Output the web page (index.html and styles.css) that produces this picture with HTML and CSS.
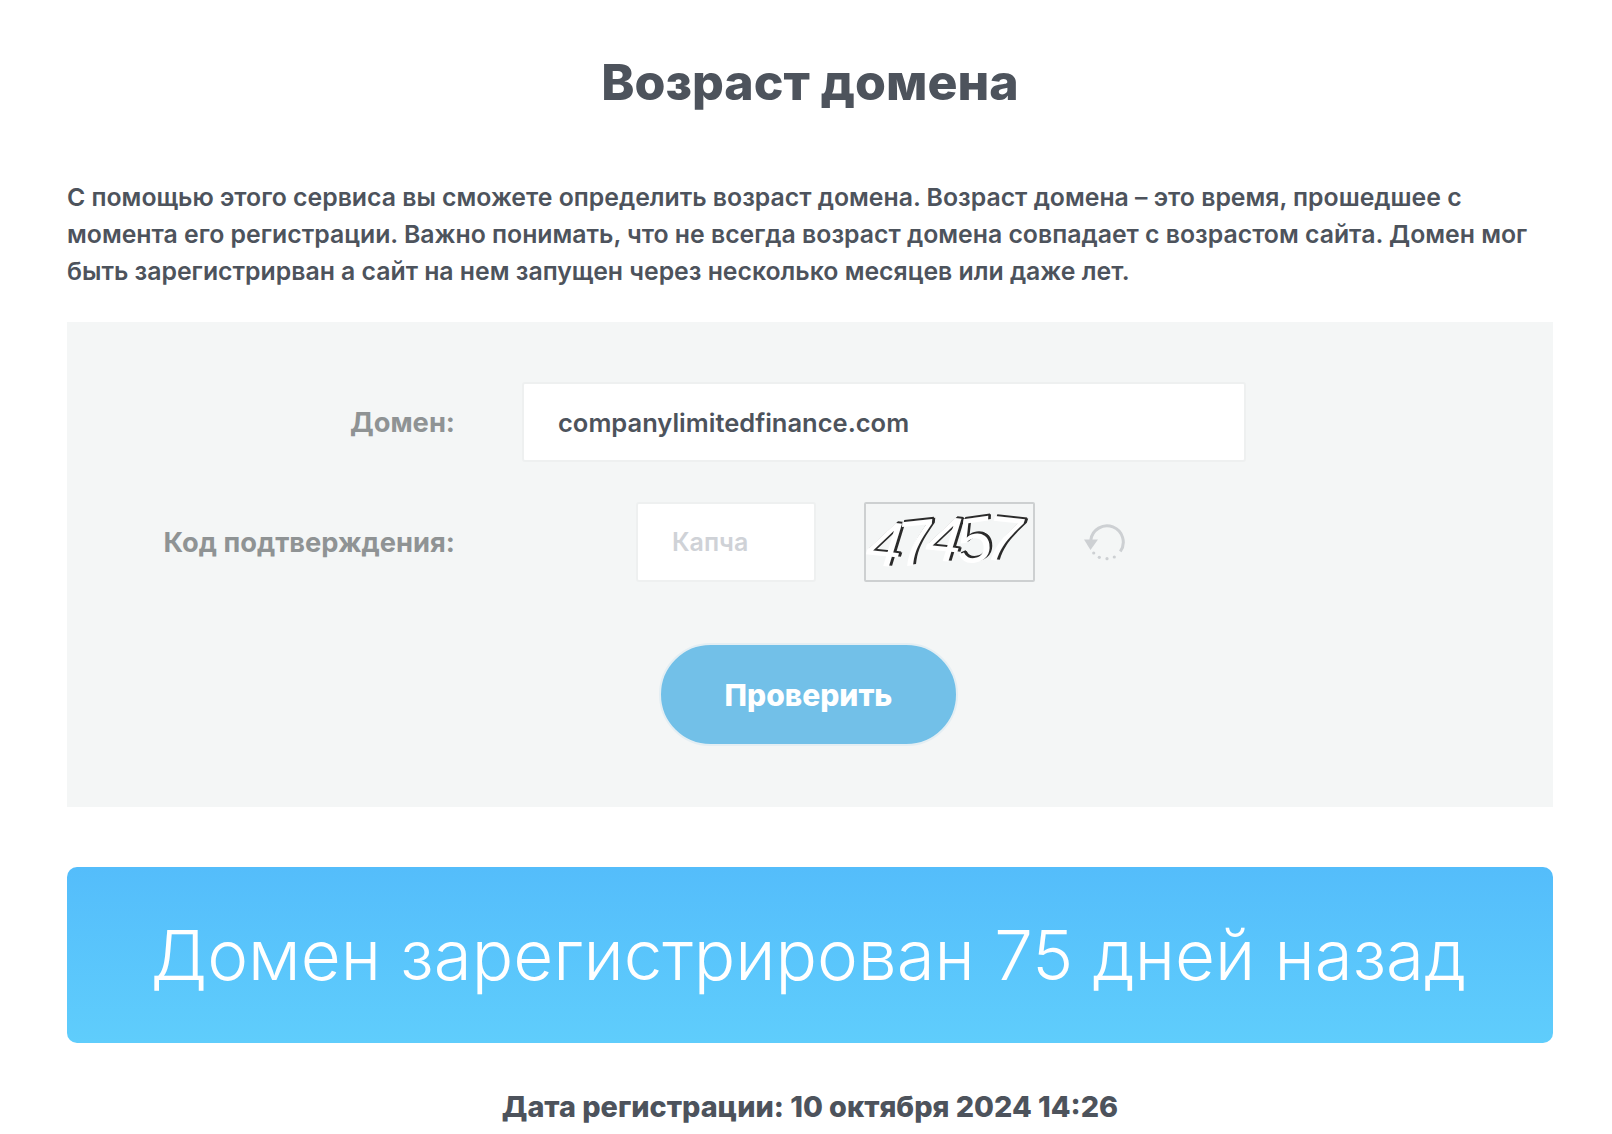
FILE: index.html
```html
<!DOCTYPE html>
<html lang="ru">
  <head>
    <meta charset="UTF-8" />
    <title>Возраст домена</title>
    <link rel="stylesheet" href="styles.css">
  </head>
  <body>
    <main class="page">
      <h1 class="title">Возраст домена</h1>
      <p class="intro">С помощью этого сервиса вы сможете определить возраст домена. Возраст домена – это время, прошедшее с момента его регистрации. Важно понимать, что не всегда возраст домена совпадает с возрастом сайта. Домен мог быть зарегистрирван а сайт на нем запущен через несколько месяцев или даже лет.</p>

      <form class="check-form">
        <div class="form-row">
          <label class="form-label">Домен:</label>
          <input class="field field-domain" type="text" value="companylimitedfinance.com">
        </div>
        <div class="form-row form-row-captcha">
          <label class="form-label">Код подтверждения:</label>
          <div class="captcha-group">
            <input class="field field-captcha" type="text" placeholder="Капча">
            <div class="captcha-image">
              <span class="d d1">4</span><span class="d d2">7</span><span class="d d3">4</span><span class="d d4">5</span><span class="d d5">7</span>
            </div>
            <svg class="refresh" viewBox="0 0 44 44" width="44" height="44" fill="none">
              <path d="M6.8 17A16.3 16.3 0 1 1 36.3 28.5" stroke="#cdd0d3" stroke-width="3"/>
              <path d="M0 16.5H14L6.5 27Z" fill="#cdd0d3"/>
              <g fill="#cdd0d3">
                <circle cx="9.7" cy="30" r="1.6"/>
                <circle cx="15.3" cy="34.3" r="1.6"/>
                <circle cx="23" cy="35.7" r="1.6"/>
                <circle cx="30.3" cy="34" r="1.6"/>
              </g>
            </svg>
          </div>
        </div>
        <div class="form-actions">
          <button class="btn-check" type="button">Проверить</button>
        </div>
      </form>

      <div class="result-card">Домен зарегистрирован 75 дней назад</div>
      <p class="reg-date">Дата регистрации: 10 октября 2024 14:26</p>
    </main>
  </body>
</html>
```

FILE: styles.css
```css
* {
  margin: 0;
  padding: 0;
  box-sizing: border-box;
}

body {
  font-family: "Inter", "Open Sans", sans-serif;
  background: #fff;
  color: #4d535c;
  overflow: hidden;
}

.page {
  padding: 0 59px 0 67px;
}

.title {
  font-size: 50px;
  font-weight: 800;
  line-height: 60px;
  text-align: center;
  padding-top: 52px;
  margin-bottom: 67px;
}

.intro {
  font-size: 24.8px;
  font-weight: 600;
  line-height: 37px;
  margin-bottom: 32px;
}

/* Form panel */
.check-form {
  background: #f4f6f6;
  height: 485px;
  padding-top: 60px;
}

.form-row {
  display: grid;
  grid-template-columns: 388px 726px;
  column-gap: 67px;
  align-items: center;
  margin-bottom: 40px;
}

.form-label {
  font-size: 27.3px;
  font-weight: 700;
  color: #8f9394;
  text-align: right;
}

.field {
  height: 80px;
  border: 2px solid #eef0f0;
  border-radius: 3px;
  background: #fff;
  font-family: inherit;
  font-size: 25.5px;
  font-weight: 600;
  color: #4d535c;
  padding: 0 34px;
  outline: none;
}

.field-domain {
  width: 724px;
}

.field-captcha {
  width: 180px;
  margin-left: 114px;
  font-size: 25px;
}

.field-captcha::placeholder {
  color: #cfd2d7;
}

.captcha-group {
  display: flex;
  align-items: center;
}

/* White digits over a dark offset shadow */
.captcha-image {
  width: 171px;
  height: 80px;
  margin-left: 48px;
  padding-left: 1px;
  border: 2px solid #cdd0d1;
  border-radius: 2px;
  display: flex;
  align-items: center;
  font-family: "Liberation Sans", sans-serif;
  font-size: 64px;
  font-style: italic;
  color: #fff;
  text-shadow: 2px -2px 0 #2b2b2b, 3px -1px 0 #2b2b2b;
  overflow: hidden;
}

.d {
  display: block;
  margin-right: -6px;
}
.d1 { transform: rotate(6deg) translateY(2px); }
.d2 { transform: rotate(-6deg) translateY(1px); }
.d3 { transform: rotate(6deg) translateY(-3px); }
.d4 { transform: rotate(-8deg) translateY(-2px); }
.d5 { transform: rotate(6deg) translateY(-3px); }

.refresh {
  margin-left: 49px;
  margin-top: 6px;
}

.form-actions {
  display: flex;
  justify-content: center;
  margin-top: 61px;
  padding-right: 3px;
}

.btn-check {
  width: 299px;
  height: 103px;
  border: 2px solid #e4eef3;
  border-radius: 52px;
  background: #72c0e8;
  color: #fff;
  font-family: inherit;
  font-size: 30px;
  font-weight: 800;
}

/* Result */
.result-card {
  margin-top: 60px;
  height: 176px;
  padding-right: 3px;
  border-radius: 10px;
  background: linear-gradient(to bottom, #54bdfb, #5fcdfc);
  color: #fff;
  font-size: 69px;
  font-weight: 300;
  display: flex;
  align-items: center;
  justify-content: center;
}

.reg-date {
  margin-top: 46px;
  font-size: 28.8px;
  font-weight: 800;
  text-align: center;
}
```
